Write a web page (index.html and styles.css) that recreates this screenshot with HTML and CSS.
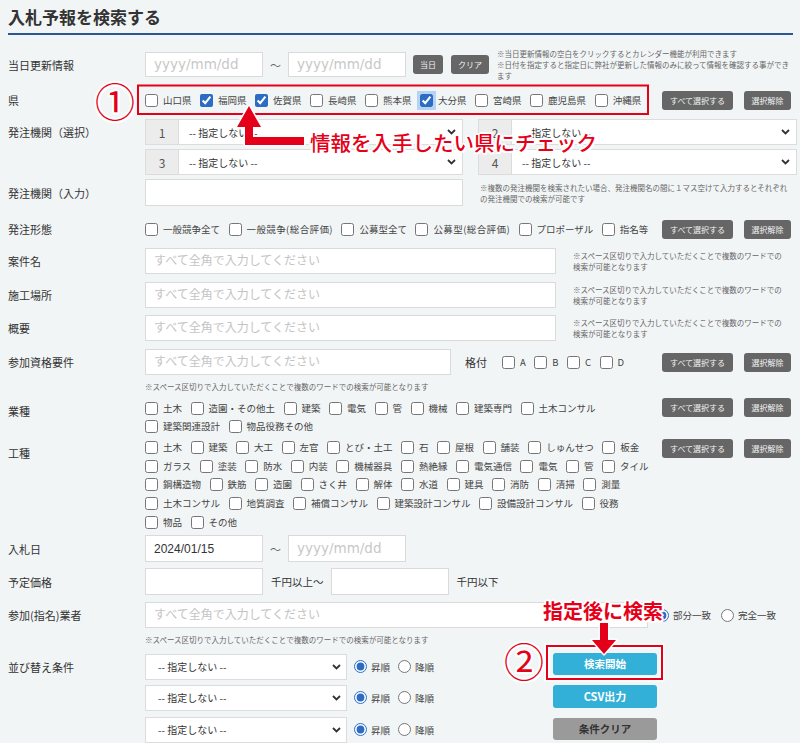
FILE: index.html
```html
<!DOCTYPE html>
<html lang="ja">
<head>
<meta charset="utf-8">
<title>入札予報を検索する</title>
<link rel="stylesheet" href="styles.css">
</head>
<body>
<main class="page">
  <h1 class="title">入札予報を検索する</h1>

  <div class="row r-today">
    <div class="label">当日更新情報</div>
    <input class="in w118 date" type="text" placeholder="yyyy/mm/dd">
    <span class="tilde">〜</span>
    <input class="in w118 date" type="text" placeholder="yyyy/mm/dd">
    <button class="btn-dark b-today" type="button">当日</button>
    <button class="btn-dark b-clear" type="button">クリア</button>
    <p class="note note-today">※当日更新情報の空白をクリックするとカレンダー機能が利用できます<br>※日付を指定すると指定日に弊社が更新した情報のみに絞って情報を確認する事ができ<br>ます</p>
  </div>

  <div class="row r-ken">
    <div class="label">県</div>
    <div class="checks">
      <label class="ck"><input type="checkbox"><span>山口県</span></label>
      <label class="ck"><input type="checkbox" checked><span>福岡県</span></label>
      <label class="ck"><input type="checkbox" checked><span>佐賀県</span></label>
      <label class="ck"><input type="checkbox"><span>長崎県</span></label>
      <label class="ck"><input type="checkbox"><span>熊本県</span></label>
      <label class="ck"><input class="focused" type="checkbox" checked><span>大分県</span></label>
      <label class="ck"><input type="checkbox"><span>宮崎県</span></label>
      <label class="ck"><input type="checkbox"><span>鹿児島県</span></label>
      <label class="ck"><input type="checkbox"><span>沖縄県</span></label>
    </div>
    <div class="btns">
      <button class="btn-dark b-all" type="button">すべて選択する</button>
      <button class="btn-dark b-none" type="button">選択解除</button>
    </div>
  </div>

  <div class="row r-sel1">
    <div class="label">発注機関（選択）</div>
    <div class="selpair">
      <span class="num">1</span>
      <div class="select"><span>-- 指定しない --</span><svg class="chev" width="9" height="6" viewBox="0 0 9 6"><path d="M1 1l3.5 3.5L8 1"/></svg></div>
    </div>
    <div class="selpair sp2">
      <span class="num">2</span>
      <div class="select"><span>-- 指定しない --</span><svg class="chev" width="9" height="6" viewBox="0 0 9 6"><path d="M1 1l3.5 3.5L8 1"/></svg></div>
    </div>
  </div>

  <div class="row r-sel2">
    <div class="label"></div>
    <div class="selpair">
      <span class="num">3</span>
      <div class="select"><span>-- 指定しない --</span><svg class="chev" width="9" height="6" viewBox="0 0 9 6"><path d="M1 1l3.5 3.5L8 1"/></svg></div>
    </div>
    <div class="selpair sp2">
      <span class="num">4</span>
      <div class="select"><span>-- 指定しない --</span><svg class="chev" width="9" height="6" viewBox="0 0 9 6"><path d="M1 1l3.5 3.5L8 1"/></svg></div>
    </div>
  </div>

  <div class="row r-kikan">
    <div class="label">発注機関（入力）</div>
    <input class="in w318" type="text">
    <p class="note note-kikan">※複数の発注機関を検索されたい場合、発注機関名の間に１マス空けて入力するとそれぞれ<br>の発注機関での検索が可能です</p>
  </div>

  <div class="row r-keitai">
    <div class="label">発注形態</div>
    <div class="checks">
      <label class="ck"><input type="checkbox"><span>一般競争全て</span></label>
      <label class="ck"><input type="checkbox"><span class="paren">一般競争(総合評価)</span></label>
      <label class="ck"><input type="checkbox"><span>公募型全て</span></label>
      <label class="ck"><input type="checkbox"><span class="paren">公募型(総合評価)</span></label>
      <label class="ck"><input type="checkbox"><span>プロポーザル</span></label>
      <label class="ck"><input type="checkbox"><span>指名等</span></label>
    </div>
    <div class="btns">
      <button class="btn-dark b-all" type="button">すべて選択する</button>
      <button class="btn-dark b-none" type="button">選択解除</button>
    </div>
  </div>

  <div class="row r-anken">
    <div class="label">案件名</div>
    <input class="in w411" type="text" placeholder="すべて全角で入力してください">
    <p class="note note-side">※スペース区切りで入力していただくことで複数のワードでの<br>検索が可能となります</p>
  </div>

  <div class="row r-basho">
    <div class="label">施工場所</div>
    <input class="in w411" type="text" placeholder="すべて全角で入力してください">
    <p class="note note-side">※スペース区切りで入力していただくことで複数のワードでの<br>検索が可能となります</p>
  </div>

  <div class="row r-gaiyo">
    <div class="label">概要</div>
    <input class="in w411" type="text" placeholder="すべて全角で入力してください">
    <p class="note note-side">※スペース区切りで入力していただくことで複数のワードでの<br>検索が可能となります</p>
  </div>

  <div class="row r-shikaku">
    <div class="label">参加資格要件</div>
    <input class="in w306" type="text" placeholder="すべて全角で入力してください">
    <span class="kaku">格付</span>
    <div class="checks grades">
      <label class="ck"><input type="checkbox"><span>A</span></label>
      <label class="ck"><input type="checkbox"><span>B</span></label>
      <label class="ck"><input type="checkbox"><span>C</span></label>
      <label class="ck"><input type="checkbox"><span>D</span></label>
    </div>
    <div class="btns">
      <button class="btn-dark b-all" type="button">すべて選択する</button>
      <button class="btn-dark b-none" type="button">選択解除</button>
    </div>
  </div>
  <p class="note note-full n-shikaku">※スペース区切りで入力していただくことで複数のワードでの検索が可能となります</p>

  <div class="block b-gyoshu">
    <div class="label lbl-top">業種</div>
    <div class="lines">
      <div class="checks line">
        <label class="ck"><input type="checkbox"><span>土木</span></label>
        <label class="ck"><input type="checkbox"><span>造園・その他土</span></label>
        <label class="ck"><input type="checkbox"><span>建築</span></label>
        <label class="ck"><input type="checkbox"><span>電気</span></label>
        <label class="ck"><input type="checkbox"><span>管</span></label>
        <label class="ck"><input type="checkbox"><span>機械</span></label>
        <label class="ck"><input type="checkbox"><span>建築専門</span></label>
        <label class="ck"><input type="checkbox"><span>土木コンサル</span></label>
      </div>
      <div class="checks line">
        <label class="ck"><input type="checkbox"><span>建築関連設計</span></label>
        <label class="ck"><input type="checkbox"><span>物品役務その他</span></label>
      </div>
    </div>
    <div class="btns">
      <button class="btn-dark b-all" type="button">すべて選択する</button>
      <button class="btn-dark b-none" type="button">選択解除</button>
    </div>
  </div>

  <div class="block b-koshu">
    <div class="label lbl-top">工種</div>
    <div class="lines">
      <div class="checks line">
        <label class="ck"><input type="checkbox"><span>土木</span></label>
        <label class="ck"><input type="checkbox"><span>建築</span></label>
        <label class="ck"><input type="checkbox"><span>大工</span></label>
        <label class="ck"><input type="checkbox"><span>左官</span></label>
        <label class="ck"><input type="checkbox"><span>とび・土工</span></label>
        <label class="ck"><input type="checkbox"><span>石</span></label>
        <label class="ck"><input type="checkbox"><span>屋根</span></label>
        <label class="ck"><input type="checkbox"><span>舗装</span></label>
        <label class="ck"><input type="checkbox"><span>しゅんせつ</span></label>
        <label class="ck"><input type="checkbox"><span>板金</span></label>
      </div>
      <div class="checks line">
        <label class="ck"><input type="checkbox"><span>ガラス</span></label>
        <label class="ck"><input type="checkbox"><span>塗装</span></label>
        <label class="ck"><input type="checkbox"><span>防水</span></label>
        <label class="ck"><input type="checkbox"><span>内装</span></label>
        <label class="ck"><input type="checkbox"><span>機械器具</span></label>
        <label class="ck"><input type="checkbox"><span>熱絶縁</span></label>
        <label class="ck"><input type="checkbox"><span>電気通信</span></label>
        <label class="ck"><input type="checkbox"><span>電気</span></label>
        <label class="ck"><input type="checkbox"><span>管</span></label>
        <label class="ck"><input type="checkbox"><span>タイル</span></label>
      </div>
      <div class="checks line">
        <label class="ck"><input type="checkbox"><span>鋼構造物</span></label>
        <label class="ck"><input type="checkbox"><span>鉄筋</span></label>
        <label class="ck"><input type="checkbox"><span>造園</span></label>
        <label class="ck"><input type="checkbox"><span>さく井</span></label>
        <label class="ck"><input type="checkbox"><span>解体</span></label>
        <label class="ck"><input type="checkbox"><span>水道</span></label>
        <label class="ck"><input type="checkbox"><span>建具</span></label>
        <label class="ck"><input type="checkbox"><span>消防</span></label>
        <label class="ck"><input type="checkbox"><span>清掃</span></label>
        <label class="ck"><input type="checkbox"><span>測量</span></label>
      </div>
      <div class="checks line">
        <label class="ck"><input type="checkbox"><span>土木コンサル</span></label>
        <label class="ck"><input type="checkbox"><span>地質調査</span></label>
        <label class="ck"><input type="checkbox"><span>補償コンサル</span></label>
        <label class="ck"><input type="checkbox"><span>建築設計コンサル</span></label>
        <label class="ck"><input type="checkbox"><span>設備設計コンサル</span></label>
        <label class="ck"><input type="checkbox"><span>役務</span></label>
      </div>
      <div class="checks line">
        <label class="ck"><input type="checkbox"><span>物品</span></label>
        <label class="ck"><input type="checkbox"><span>その他</span></label>
      </div>
    </div>
    <div class="btns">
      <button class="btn-dark b-all" type="button">すべて選択する</button>
      <button class="btn-dark b-none" type="button">選択解除</button>
    </div>
  </div>

  <div class="row r-nyusatsu">
    <div class="label">入札日</div>
    <input class="in w118" type="text" value="2024/01/15">
    <span class="tilde">〜</span>
    <input class="in w118 date" type="text" placeholder="yyyy/mm/dd">
  </div>

  <div class="row r-kakaku">
    <div class="label">予定価格</div>
    <input class="in w118" type="text">
    <span class="unit u1">千円以上〜</span>
    <input class="in w118" type="text">
    <span class="unit u2">千円以下</span>
  </div>

  <div class="row r-gyosha">
    <div class="label">参加(指名)業者</div>
    <input class="in w503" type="text" placeholder="すべて全角で入力してください">
    <label class="rd rd-part"><input type="radio" name="match" checked><span>部分一致</span></label>
    <label class="rd rd-full"><input type="radio" name="match"><span>完全一致</span></label>
  </div>
  <p class="note note-full n-gyosha">※スペース区切りで入力していただくことで複数のワードでの検索が可能となります</p>

  <div class="row r-sort1">
    <div class="label">並び替え条件</div>
    <div class="select sortsel"><span>-- 指定しない --</span><svg class="chev" width="9" height="6" viewBox="0 0 9 6"><path d="M1 1l3.5 3.5L8 1"/></svg></div>
    <div class="sortctl">
      <label class="rd"><input type="radio" name="s1" checked><span>昇順</span></label>
      <label class="rd"><input type="radio" name="s1"><span>降順</span></label>
    </div>
    <button class="btn-act btn-blue a1" type="button">検索開始</button>
  </div>
  <div class="row r-sort2">
    <div class="label"></div>
    <div class="select sortsel"><span>-- 指定しない --</span><svg class="chev" width="9" height="6" viewBox="0 0 9 6"><path d="M1 1l3.5 3.5L8 1"/></svg></div>
    <div class="sortctl">
      <label class="rd"><input type="radio" name="s2" checked><span>昇順</span></label>
      <label class="rd"><input type="radio" name="s2"><span>降順</span></label>
    </div>
    <button class="btn-act btn-blue a2" type="button">CSV出力</button>
  </div>
  <div class="row r-sort3">
    <div class="label"></div>
    <div class="select sortsel"><span>-- 指定しない --</span><svg class="chev" width="9" height="6" viewBox="0 0 9 6"><path d="M1 1l3.5 3.5L8 1"/></svg></div>
    <div class="sortctl">
      <label class="rd"><input type="radio" name="s3" checked><span>昇順</span></label>
      <label class="rd"><input type="radio" name="s3"><span>降順</span></label>
    </div>
    <button class="btn-act btn-gray a3" type="button">条件クリア</button>
  </div>
</main>

<svg class="anno" width="800" height="743" viewBox="0 0 800 743">
  <rect x="138" y="85.5" width="510" height="28.5" class="box"/>
  <rect x="547" y="646" width="115" height="33" class="box-halo"/>
  <rect x="547" y="646" width="115" height="33" class="box"/>
  <path class="arrow" d="M249 106 L261 127 L253 127 L253 137 L304 137 L304 145 L245 145 L245 127 L237 127 Z"/>
  <path class="arrow" d="M600 623 L608 623 L608 640 L616 640 L604 654 L592 640 L600 640 Z"/>
</svg>
<div class="callout c1">情報を入手したい県にチェック</div>
<div class="callout c2">指定後に検索</div>
<div class="circ n1">①</div>
<div class="circ n2">②</div>
</body>
</html>
```

FILE: styles.css
```css
* { box-sizing: border-box; }
html, body { margin: 0; padding: 0; }
body {
  width: 800px;
  height: 743px;
  overflow: hidden;
  position: relative;
  background: #f2f5f6;
  font-family: "Noto Sans CJK JP", "Noto Sans", sans-serif;
  color: #333;
}
.page { padding: 0 7px 0 8px; }

/* notes (base) */
.note { margin: 0; font-size: 7.5px; line-height: 11px; color: #666; white-space: nowrap; }
.note-today { margin-left: 8px; }
.note-kikan { margin-left: 17px; }
.note-side { margin-left: 17px; }
.note-full { padding-left: 137px; height: 11px; }

.title {
  margin: 0;
  font-size: 17px;
  font-weight: 700;
  line-height: 20px;
  padding: 7px 0 6px;
  border-bottom: 2px solid #2d5697;
  color: #333;
}

.row { display: flex; align-items: center; }
.row > *, .block > * { flex-shrink: 0; }
.label { width: 137px; font-size: 11px; line-height: 14px; color: #333; white-space: nowrap; }

/* vertical rhythm */
.r-today { margin-top: 17px; height: 25px; }
.r-ken { margin-top: 9px; height: 28px; }
.r-sel1 { margin-top: 5px; height: 26px; }
.r-sel2 { margin-top: 4px; height: 26px; }
.r-kikan { margin-top: 4px; height: 27px; }
.r-keitai { margin-top: 10px; height: 26px; }
.r-anken { margin-top: 6px; height: 26px; }
.r-basho { margin-top: 8px; height: 26px; }
.r-gaiyo { margin-top: 7px; height: 26px; }
.r-shikaku { margin-top: 8px; height: 26px; }
.n-shikaku { margin-top: 6px; }
.b-gyoshu { margin-top: 7px; }
.b-koshu { margin-top: 3px; }
.r-nyusatsu { margin-top: 4px; height: 27px; }
.r-kakaku { margin-top: 6px; height: 27px; }
.r-gyosha { margin-top: 7px; height: 26px; }
.n-gyosha { margin-top: 6px; }
.r-sort1 { margin-top: 8.5px; height: 26px; }
.r-sort2 { margin-top: 5px; height: 26px; }
.r-sort3 { margin-top: 6px; height: 26px; }

/* inputs */
.in {
  height: 100%;
  margin: 0;
  border: 1px solid #dadada;
  border-radius: 0;
  background: #fff;
  padding: 0 8px;
  font-family: "Liberation Sans", "Noto Sans CJK JP", sans-serif;
  font-size: 12px;
  color: #333;
  outline: none;
}
.in::placeholder { color: #c4c4c4; font-family: "Noto Sans CJK JP", sans-serif; font-size: 12px; }
.in.date::placeholder { font-family: "DejaVu Sans", sans-serif; font-size: 13.5px; color: #c8c8c8; }
.w118 { width: 118px; }
.w306 { width: 306px; }
.w318 { width: 318px; }
.w411 { width: 411px; }
.w503 { width: 503px; }

.tilde { width: 25px; text-align: center; font-size: 11px; color: #666; }

/* buttons */
.btn-dark {
  height: 19px;
  padding: 0;
  border: 0;
  border-radius: 3px;
  background: #666;
  color: #f2f2f2;
  font-family: "Noto Sans CJK JP", sans-serif;
  font-size: 8px;
  line-height: 19px;
}
.b-today { width: 30px; margin-left: 7px; }
.b-clear { width: 38px; margin-left: 8px; }
.b-all { width: 71px; }
.b-none { width: 47px; }
.btns { margin-left: auto; margin-right: 2px; display: flex; gap: 11px; }

/* checkboxes */
.checks { display: flex; align-items: center; gap: 8.5px; }
.ck { display: flex; align-items: center; font-size: 9.5px; line-height: 13px; color: #444; white-space: nowrap; }
.ck input {
  width: 13px;
  height: 13px;
  margin: 0 5px 0 0;
  accent-color: #2c6cc2;
}
.ck input.focused { outline: 3px solid #b5d3f5; outline-offset: 0; border-radius: 2px; }
.ck .paren { letter-spacing: 0.4px; }

/* selects */
.selpair { display: flex; width: 318px; height: 100%; }
.selpair.sp2 { width: 319px; margin-left: 15px; }
.num {
  width: 34px;
  background: #ececec;
  border: 1px solid #dcdcdc;
  display: flex;
  align-items: center;
  justify-content: center;
  font-size: 12px;
  color: #555;
}
.select {
  flex: 1;
  display: flex;
  align-items: center;
  justify-content: space-between;
  background: #fff;
  border: 1px solid #dcdcdc;
  border-left: 0;
  padding: 0 6px 0 10px;
  font-size: 10px;
  color: #333;
  white-space: nowrap;
}
.chev path { fill: none; stroke: #333; stroke-width: 1.8; }
.sortsel { flex: none; width: 202px; height: 100%; border-left: 1px solid #dcdcdc; padding: 0 5px 0 12px; }

/* 参加資格 */
.kaku { margin-left: 14px; font-size: 11px; color: #333; }
.grades { margin-left: 15px; }

/* multi-line check blocks */
.block { display: flex; align-items: flex-start; }
.lbl-top { padding-top: 5px; }
.b-koshu .lbl-top { padding-top: 8px; }
.lines { display: flex; flex-direction: column; }
.b-gyoshu .line { height: 18px; }
.b-koshu .line { height: 18.7px; }
.b-gyoshu .btns { margin-top: -1px; }
.b-koshu .btns { margin-top: 1px; }

/* price units */
.unit { font-size: 10.5px; color: #333; white-space: nowrap; }
.u1 { margin: 0 7px 0 8px; }
.u2 { margin-left: 8px; }

/* radios */
.rd { display: flex; align-items: center; font-size: 9.5px; color: #444; white-space: nowrap; }
.rd input { width: 13px; height: 13px; margin: 0 4px 0 0; accent-color: #2c6cc2; }
.rd-part { margin-left: 8px; }
.rd-full { margin-left: 10px; }
.sortctl { width: 206px; height: 100%; display: flex; align-items: center; gap: 8px; padding-left: 7px; }

/* action buttons */
.btn-act {
  width: 104px;
  padding: 0;
  border: 0;
  border-radius: 3px;
  font-family: "Noto Sans CJK JP", sans-serif;
  font-weight: 700;
  align-self: flex-start;
}
.btn-blue { background: #33b0d8; color: #fff; }
.btn-gray { background: #9a9a9a; color: #333; }
.a1 { height: 22px; margin-top: -1px; font-size: 10.5px; }
.a2 { height: 23px; margin-top: 0; font-size: 11px; }
.a3 { height: 22px; margin-top: 1px; font-size: 10.5px; }

/* annotation overlay */
.anno { position: absolute; left: 0; top: 0; pointer-events: none; }
.box { fill: none; stroke: #e50019; stroke-width: 2; }
.box-halo { fill: none; stroke: #fff; stroke-width: 5; }
.arrow { fill: #e50019; stroke: #fff; stroke-width: 3; paint-order: stroke; stroke-linejoin: round; }

.callout, .circ {
  position: absolute;
  color: #e50019;
  white-space: nowrap;
  pointer-events: none;
  text-shadow: 2px 0 #fff, -2px 0 #fff, 0 2px #fff, 0 -2px #fff,
    1.5px 1.5px #fff, -1.5px 1.5px #fff, 1.5px -1.5px #fff, -1.5px -1.5px #fff;
}
.c1 { left: 310px; top: 130px; font-size: 20.5px; line-height: 24px; font-weight: 500; }
.c2 { left: 543px; top: 599px; font-size: 20px; line-height: 24px; font-weight: 700; }
.circ { font-size: 40px; line-height: 40px; font-weight: 400; }
.n1 { left: 95px; top: 80px; }
.n2 { left: 504px; top: 640px; }
```
